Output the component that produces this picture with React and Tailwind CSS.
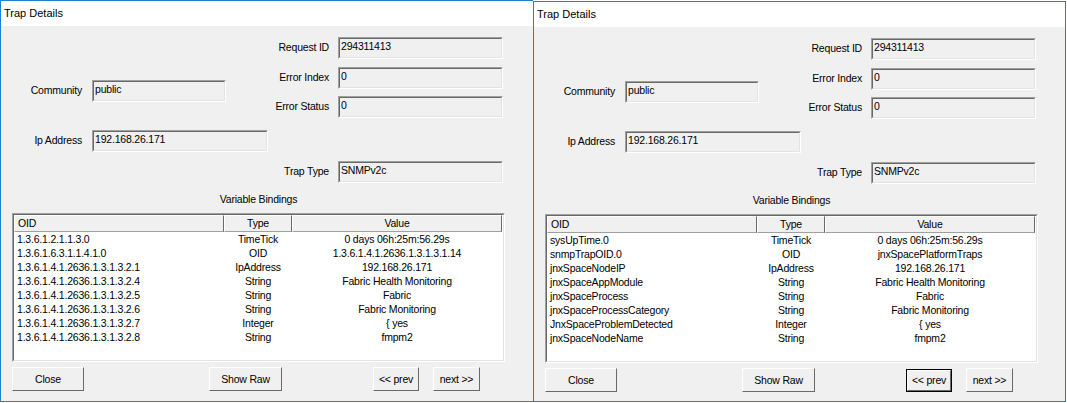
import React from 'react';

const types = ['TimeTick', 'OID', 'IpAddress', 'String', 'String', 'String', 'Integer', 'String'];
const values = [
  '0 days 06h:25m:56.29s',
  null,
  '192.168.26.171',
  'Fabric Health Monitoring',
  'Fabric',
  'Fabric Monitoring',
  '{ yes',
  'fmpm2',
];

const numericOids = [
  '1.3.6.1.2.1.1.3.0',
  '1.3.6.1.6.3.1.1.4.1.0',
  '1.3.6.1.4.1.2636.1.3.1.3.2.1',
  '1.3.6.1.4.1.2636.1.3.1.3.2.4',
  '1.3.6.1.4.1.2636.1.3.1.3.2.5',
  '1.3.6.1.4.1.2636.1.3.1.3.2.6',
  '1.3.6.1.4.1.2636.1.3.1.3.2.7',
  '1.3.6.1.4.1.2636.1.3.1.3.2.8',
];

const namedOids = [
  'sysUpTime.0',
  'snmpTrapOID.0',
  'jnxSpaceNodeIP',
  'jnxSpaceAppModule',
  'jnxSpaceProcess',
  'jnxSpaceProcessCategory',
  'JnxSpaceProblemDetected',
  'jnxSpaceNodeName',
];

const TextBox = ({ value, width }) => (
  <div className={`h-[22px] ${width} border border-t-[#a0a0a0] border-l-[#a0a0a0] border-b-white border-r-white`}>
    <div className="h-full border border-t-[#696969] border-l-[#696969] border-b-[#e3e3e3] border-r-[#e3e3e3] px-[1px] leading-[14px] whitespace-nowrap">
      {value}
    </div>
  </div>
);

const Field = ({ label, value, labelWidth, gap, width, className }) => (
  <div className={`flex items-center ${className}`}>
    <div className={`${labelWidth} text-right whitespace-nowrap`}>{label}</div>
    <div className={gap}>
      <TextBox value={value} width={width} />
    </div>
  </div>
);

const Button = ({ children, width, focused, className }) => (
  <button
    className={`${width} ${focused ? 'h-[23px] border border-black' : 'h-[24px]'} bg-[#f0f0f0] ${className}`}
  >
    <div className="h-full w-full border border-t-white border-l-white border-b-[#696969] border-r-[#696969] flex items-center justify-center">
      <span className="leading-none">{children}</span>
    </div>
  </button>
);

// blue frame drawn as a 1px padded wrapper
const Dialog = ({ oids, oidValue, focusPrev, className }) => (
  <div className={`bg-[#1883d7] p-[1px] ${className}`}>
    <div className="flex flex-col h-full bg-[#f0f0f0]">
      <div className="h-[25px] bg-white flex items-center pl-[3px] text-[11px] tracking-normal">Trap Details</div>

      <div className="flex">
        <div className="w-[269px]">
          <Field
            className="mt-[54px]"
            label="Community"
            value="public"
            labelWidth="w-[81px]"
            gap="ml-[10px]"
            width="w-[134px]"
          />
          <Field
            className="mt-[28px]"
            label="Ip Address"
            value="192.168.26.171"
            labelWidth="w-[81px]"
            gap="ml-[10px]"
            width="w-[176px]"
          />
        </div>
        <div>
          <Field className="mt-[11px]" label="Request ID" value="294311413" labelWidth="w-[59px]" gap="ml-[9px]" width="w-[165px]" />
          <Field className="mt-[8px]" label="Error Index" value="0" labelWidth="w-[59px]" gap="ml-[9px]" width="w-[165px]" />
          <Field className="mt-[7px]" label="Error Status" value="0" labelWidth="w-[59px]" gap="ml-[9px]" width="w-[165px]" />
          <Field className="mt-[43px]" label="Trap Type" value="SNMPv2c" labelWidth="w-[59px]" gap="ml-[9px]" width="w-[165px]" />
        </div>
      </div>

      <div className="ml-[11px] w-[493px] mt-[10px] h-[13px] leading-[13px] text-center">Variable Bindings</div>

      <div className="ml-[11px] mt-[7px] w-[493px] h-[149px] border border-t-[#a0a0a0] border-l-[#a0a0a0] border-b-white border-r-white">
        <div className="h-full border border-t-[#696969] border-l-[#696969] border-b-[#e3e3e3] border-r-[#e3e3e3] bg-white">
          <div className="grid grid-cols-[210px_68px_210px] h-[17px] bg-[#f0f0f0] w-[488px]">
            <div className="border-t border-l border-t-white border-l-white border-b border-r border-b-[#a0a0a0] border-r-[#696969] pl-[3px] leading-[15px]">OID</div>
            <div className="border-t border-l border-t-white border-l-white border-b border-r border-b-[#a0a0a0] border-r-[#696969] text-center leading-[15px]">Type</div>
            <div className="border-t border-l border-t-white border-l-white border-b border-r border-b-[#a0a0a0] border-r-[#696969] text-center leading-[15px]">Value</div>
          </div>
          {oids.map((oid, i) => (
            <div key={i} className="grid grid-cols-[210px_68px_210px] h-[14px] leading-[14px] whitespace-nowrap">
              <div className="pl-[3px]">{oid}</div>
              <div className="text-center">{types[i]}</div>
              <div className="text-center">{values[i] ?? oidValue}</div>
            </div>
          ))}
        </div>
      </div>

      <div className="flex items-center mt-[5px]">
        <Button width="w-[72px]" className="ml-[11px]">Close</Button>
        <Button width="w-[73px]" className="ml-[125px]">Show Raw</Button>
        <Button width="w-[46px]" focused={focusPrev} className="ml-[91px]">&lt;&lt; prev</Button>
        <Button width="w-[47px]" className="ml-[14px]">next &gt;&gt;</Button>
      </div>
    </div>
  </div>
);

export default function App() {
  return (
    <div className="w-[1067px] h-[403px] bg-white flex items-start text-[10.5px] tracking-[-0.2px] text-black font-['Liberation_Sans',Arial,sans-serif]">
      <Dialog oids={numericOids} oidValue="1.3.6.1.4.1.2636.1.3.1.3.1.14" className="w-[533px] h-[402px] pr-0" />
      <Dialog oids={namedOids} oidValue="jnxSpacePlatformTraps" focusPrev className="w-[533px] h-[401px] mt-[1px]" />
    </div>
  );
}
